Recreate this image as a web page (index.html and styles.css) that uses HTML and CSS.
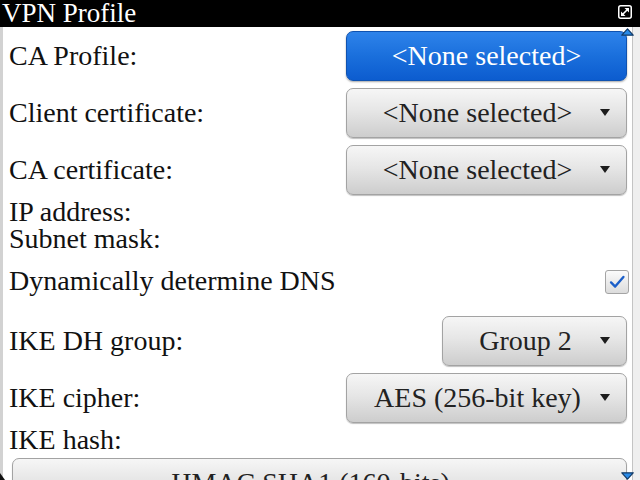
FILE: index.html
```html
<!DOCTYPE html>
<html>
<head>
<meta charset="utf-8">
<link rel="stylesheet" href="styles.css">
</head>
<body>
<div class="screen">
  <header class="titlebar">
    <span class="title">VPN Profile</span>
    <svg class="expand" width="14" height="14" viewBox="0 0 14 14">
      <rect x="0.75" y="0.75" width="12.5" height="12.5" rx="2" fill="none" stroke="#fff" stroke-width="1.5"/>
      <path d="M3.5 10.5 L10.5 3.5" stroke="#fff" stroke-width="1.6"/>
      <path d="M6.5 3 L11 3 L11 7.5 Z" fill="#fff"/>
      <path d="M3 6.5 L3 11 L7.5 11 Z" fill="#fff"/>
    </svg>
  </header>
  <div class="content">
    <main class="form">
      <div class="row">
        <span class="label">CA Profile:</span>
        <div class="select focused"><span class="value">&lt;None selected&gt;</span></div>
      </div>
      <div class="row">
        <span class="label">Client certificate:</span>
        <div class="select"><span class="value">&lt;None selected&gt;</span><span class="arrow"></span></div>
      </div>
      <div class="row">
        <span class="label">CA certificate:</span>
        <div class="select"><span class="value">&lt;None selected&gt;</span><span class="arrow"></span></div>
      </div>
      <div class="line">IP address:</div>
      <div class="line">Subnet mask:</div>
      <div class="row check-row">
        <span class="label">Dynamically determine DNS</span>
        <span class="checkbox">
          <svg width="24" height="24" viewBox="0 0 24 24"><path d="M5.5 12.5 L10 17 L19 6.5" fill="none" stroke="#1b5fc9" stroke-width="2.6" stroke-linecap="round" stroke-linejoin="round"/></svg>
        </span>
      </div>
      <div class="row">
        <span class="label">IKE DH group:</span>
        <div class="select short"><span class="value">Group 2</span><span class="arrow"></span></div>
      </div>
      <div class="row">
        <span class="label">IKE cipher:</span>
        <div class="select"><span class="value">AES (256-bit key)</span><span class="arrow"></span></div>
      </div>
      <div class="line">IKE hash:</div>
      <div class="select wide"><span class="value">HMAC SHA1 (160-bits)</span><span class="arrow"></span></div>
    </main>
    <div class="scrollbar"></div>
  </div>
  <svg class="scroll-up" width="13" height="8" viewBox="0 0 13 8"><path d="M0.8 7.2 L6.5 0.8 L12.2 7.2 Z" fill="#2a8be8" stroke="#123a66" stroke-width="1.2" stroke-linejoin="round"/></svg>
  <svg class="scroll-down" width="13" height="8" viewBox="0 0 13 8"><path d="M0.8 0.8 L6.5 7.2 L12.2 0.8 Z" fill="#2a8be8" stroke="#123a66" stroke-width="1.2" stroke-linejoin="round"/></svg>
  <span class="corner"></span>
</div>
</body>
</html>
```
FILE: styles.css
```css
html, body {
  margin: 0;
  padding: 0;
  background: #fff;
}
body {
  width: 640px;
  height: 480px;
  overflow: hidden;
  font-family: "Liberation Serif", "Times New Roman", serif;
}
.screen {
  position: relative;
  width: 640px;
  height: 480px;
  overflow: hidden;
  display: flex;
  flex-direction: column;
}
.titlebar {
  height: 27px;
  flex: none;
  background: #000;
  display: flex;
  align-items: center;
  justify-content: space-between;
  padding: 0 8px 0 2px;
}
.title {
  color: #fff;
  font-size: 27px;
  line-height: 27px;
}
.expand {
  display: block;
  margin-top: -3px;
}
.content {
  flex: 1;
  display: flex;
  min-height: 0;
}
.form {
  flex: 1;
  border-left: 3px solid #d2d2d2;
  padding: 0 5px 0 6px;
  display: flex;
  flex-direction: column;
}
.scrollbar {
  width: 7px;
  flex: none;
  background: #efefef;
  border-left: 1px solid #c4c4c4;
}
.row {
  height: 57px;
  flex: none;
  display: flex;
  align-items: center;
  justify-content: space-between;
}
.label, .line {
  font-size: 28px;
  line-height: 27px;
  color: #111;
  white-space: nowrap;
}
.line {
  height: 27px;
  flex: none;
}
.check-row {
  height: 60px;
  align-items: flex-start;
  padding-top: 15px;
  box-sizing: border-box;
}
.checkbox {
  width: 24px;
  height: 24px;
  margin-top: 3px;
  margin-right: -2px;
  box-sizing: border-box;
  border: 1px solid #a4a4a4;
  border-radius: 3px;
  background: linear-gradient(#fbfbfb, #dcdcdc);
  display: flex;
  align-items: center;
  justify-content: center;
}
.checkbox svg {
  display: block;
}
.select {
  width: 281px;
  height: 50px;
  flex: none;
  box-sizing: border-box;
  border: 1px solid #a3a3a3;
  border-radius: 7px;
  background: linear-gradient(#f6f6f6 0%, #e6e6e6 45%, #cdcdcd 100%);
  box-shadow: 0 1px 1px rgba(0, 0, 0, 0.25);
  display: flex;
  align-items: center;
  color: #222;
  font-size: 28px;
}
.select .value {
  flex: 1;
  text-align: center;
  white-space: nowrap;
  line-height: 30px;
}
.select .arrow {
  flex: none;
  width: 0;
  height: 0;
  border-left: 5.5px solid transparent;
  border-right: 5.5px solid transparent;
  border-top: 7px solid #1c1c1c;
  margin-left: -8px;
  margin-right: 16px;
}
.select.focused {
  background: linear-gradient(#2e83ea 0%, #1a6fdc 50%, #0c5ccf 100%);
  border-color: #0f52b0;
  color: #fff;
  box-shadow: 0 1px 2px rgba(0, 0, 0, 0.35);
}
.select.short {
  width: 185px;
}
.select.wide {
  width: auto;
  margin-top: 5px;
  margin-left: 3px;
}
.scroll-up {
  position: absolute;
  left: 621px;
  top: 28px;
}
.scroll-down {
  position: absolute;
  left: 621px;
  top: 472px;
}
.corner {
  position: absolute;
  left: 0;
  bottom: 0;
  width: 0;
  height: 0;
  border-left: 5px solid #111;
  border-top: 7px solid transparent;
}
```
